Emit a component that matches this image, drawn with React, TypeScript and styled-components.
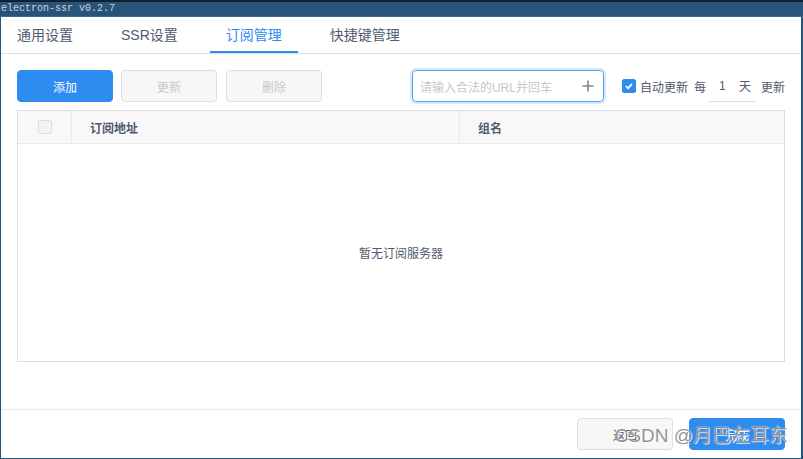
import styled, { createGlobalStyle } from 'styled-components'

const GlobalStyle = createGlobalStyle`
    body {
        margin: 0;
        font-family: "Liberation Sans", "Noto Sans CJK SC", sans-serif;
        color: #515a6e;
    }
`

const Window = styled.div`
    width: 803px;
    height: 459px;
    box-sizing: border-box;
    display: flex;
    flex-direction: column;
    background: #fff;
    position: relative;
    overflow: hidden;
`

const TitleBar = styled.div`
    height: 14px;
    border-top: 2px solid #10202e;
    background: #285479;
    border-bottom: 1px solid #3a6a90;
    color: #c9d3dc;
    font-family: "Liberation Mono", monospace;
    font-size: 10px;
    line-height: 13px;
    padding-left: 1px;
    box-sizing: content-box;
`

const Body = styled.div`
    flex: 1;
    display: flex;
    flex-direction: column;
    border-left: 1px solid #27547a;
    border-right: 2px solid #27547a;
    border-bottom: 1px solid #27547a;
    min-height: 0;
`

const TabBar = styled.div`
    display: flex;
    border-bottom: 1px solid #dcdee2;
    height: 36px;
`

const Tab = styled.div<{ $active?: boolean }>`
    position: relative;
    padding: 8px 16px;
    margin-right: 16px;
    font-size: 14px;
    line-height: 20px;
    color: ${p => (p.$active ? '#2d8cf0' : '#515a6e')};
    &:after {
        content: '';
        display: ${p => (p.$active ? 'block' : 'none')};
        position: absolute;
        left: 0;
        right: 0;
        bottom: 0;
        height: 2px;
        background: #2d8cf0;
    }
`

const Content = styled.div`
    flex: 1;
    padding: 16px 16px 0;
`

const Toolbar = styled.div`
    display: flex;
    justify-content: space-between;
    align-items: center;
    height: 32px;
`

const Group = styled.div`
    display: flex;
    align-items: center;
`

const Button = styled.button<{ $primary?: boolean; $gap?: number }>`
    width: 96px;
    height: 32px;
    margin-right: ${p => p.$gap ?? 0}px;
    border-radius: 4px;
    font-family: inherit;
    font-size: 12px;
    border: 1px solid ${p => (p.$primary ? '#2d8cf0' : '#dcdee2')};
    background: ${p => (p.$primary ? '#2d8cf0' : '#f7f7f7')};
    color: ${p => (p.$primary ? '#fff' : '#c5c8ce')};
    padding: 0;
`

const FooterButton = styled(Button)`
    color: ${p => (p.$primary ? '#fff' : '#515a6e')};
`

const UrlInput = styled.div`
    width: 192px;
    height: 32px;
    box-sizing: border-box;
    border: 1px solid #57a3f3;
    border-radius: 4px;
    box-shadow: 0 0 0 2px rgba(45, 140, 240, 0.2);
    display: flex;
    align-items: center;
    justify-content: space-between;
    padding: 0 9px 0 7px;
    font-size: 12px;
    color: #c5c8ce;
    margin-right: 18px;
`

const CheckBox = styled.span<{ $checked?: boolean; $disabled?: boolean }>`
    width: 14px;
    height: 14px;
    box-sizing: border-box;
    border-radius: 2px;
    display: inline-flex;
    align-items: center;
    justify-content: center;
    border: 1px solid ${p => (p.$checked ? '#2d8cf0' : '#dcdee2')};
    background: ${p => (p.$checked ? '#2d8cf0' : p.$disabled ? '#f3f3f3' : '#fff')};
`

const Label = styled.span<{ $gap?: number }>`
    font-size: 12px;
    color: #515a6e;
    margin-left: ${p => p.$gap ?? 0}px;
`

const DaysInput = styled.div`
    width: 47px;
    height: 32px;
    box-sizing: border-box;
    border-bottom: 1px solid #dcdee2;
    margin-left: 3px;
    margin-right: 5px;
    display: flex;
    align-items: center;
    justify-content: space-between;
    padding: 0 5px 0 10px;
    font-size: 12px;
    color: #515a6e;
`

const Table = styled.div`
    margin-top: 8px;
    height: 252px;
    box-sizing: border-box;
    border: 1px solid #dcdee2;
    display: flex;
    flex-direction: column;
`

const HeadRow = styled.div`
    display: grid;
    grid-template-columns: 54px 388px 1fr;
    height: 32px;
    background: #f8f8f9;
    border-bottom: 1px solid #e8eaec;
`

const HeadCell = styled.div<{ $center?: boolean }>`
    display: flex;
    align-items: center;
    justify-content: ${p => (p.$center ? 'center' : 'flex-start')};
    padding-left: ${p => (p.$center ? 0 : 18)}px;
    font-size: 12px;
    font-weight: bold;
    color: #515a6e;
    border-right: 1px solid #e8eaec;
    &:last-child {
        border-right: none;
    }
`

const Empty = styled.div`
    flex: 1;
    display: flex;
    align-items: center;
    justify-content: center;
    font-size: 12px;
    color: #515a6e;
`

const Footer = styled.div`
    position: relative;
    border-top: 1px solid #e8eaec;
    padding: 8px 16px;
    display: flex;
    justify-content: flex-end;
    gap: 16px;
`

const Watermark = styled.div`
    position: absolute;
    right: 13px;
    top: 10px;
    font-family: "Liberation Sans", "Noto Sans CJK SC", sans-serif;
    font-size: 19px;
    color: rgba(110, 110, 110, 0.75);
    text-shadow: 0 0 1px #fff, 1px 1px 0 rgba(255, 255, 255, 0.7);
    pointer-events: none;
    white-space: nowrap;
`

const tabs = ['通用设置', 'SSR设置', '订阅管理', '快捷键管理']

const App = () => {
    return (
        <Window>
            <GlobalStyle />
            <TitleBar>electron-ssr v0.2.7</TitleBar>
            <Body>
                <TabBar>
                    {tabs.map((t, i) => (
                        <Tab key={t} $active={i === 2}>{t}</Tab>
                    ))}
                </TabBar>
                <Content>
                    <Toolbar>
                        <Group>
                            <Button $primary $gap={8}>添加</Button>
                            <Button $gap={9}>更新</Button>
                            <Button>删除</Button>
                        </Group>
                        <Group>
                            <UrlInput>
                                <span>请输入合法的URL并回车</span>
                                <svg width="12" height="12" viewBox="0 0 12 12">
                                    <path d="M6 0.5V11.5M0.5 6H11.5" stroke="#808695" strokeWidth="1.6" />
                                </svg>
                            </UrlInput>
                            <CheckBox $checked>
                                <svg width="10" height="10" viewBox="0 0 10 10">
                                    <path d="M2 5.2L4.2 7.2L8 2.8" stroke="#fff" strokeWidth="1.8" fill="none" />
                                </svg>
                            </CheckBox>
                            <Label $gap={4}>自动更新</Label>
                            <Label $gap={6}>每</Label>
                            <DaysInput>
                                <span>1</span>
                                <span>天</span>
                            </DaysInput>
                            <Label>更新</Label>
                        </Group>
                    </Toolbar>
                    <Table>
                        <HeadRow>
                            <HeadCell $center>
                                <CheckBox $disabled />
                            </HeadCell>
                            <HeadCell>订阅地址</HeadCell>
                            <HeadCell>组名</HeadCell>
                        </HeadRow>
                        <Empty>暂无订阅服务器</Empty>
                    </Table>
                </Content>
                <Footer>
                    <FooterButton>返回</FooterButton>
                    <FooterButton $primary>完成</FooterButton>
                    <Watermark>CSDN @月巴左耳东</Watermark>
                </Footer>
            </Body>
        </Window>
    )
}

export default App
